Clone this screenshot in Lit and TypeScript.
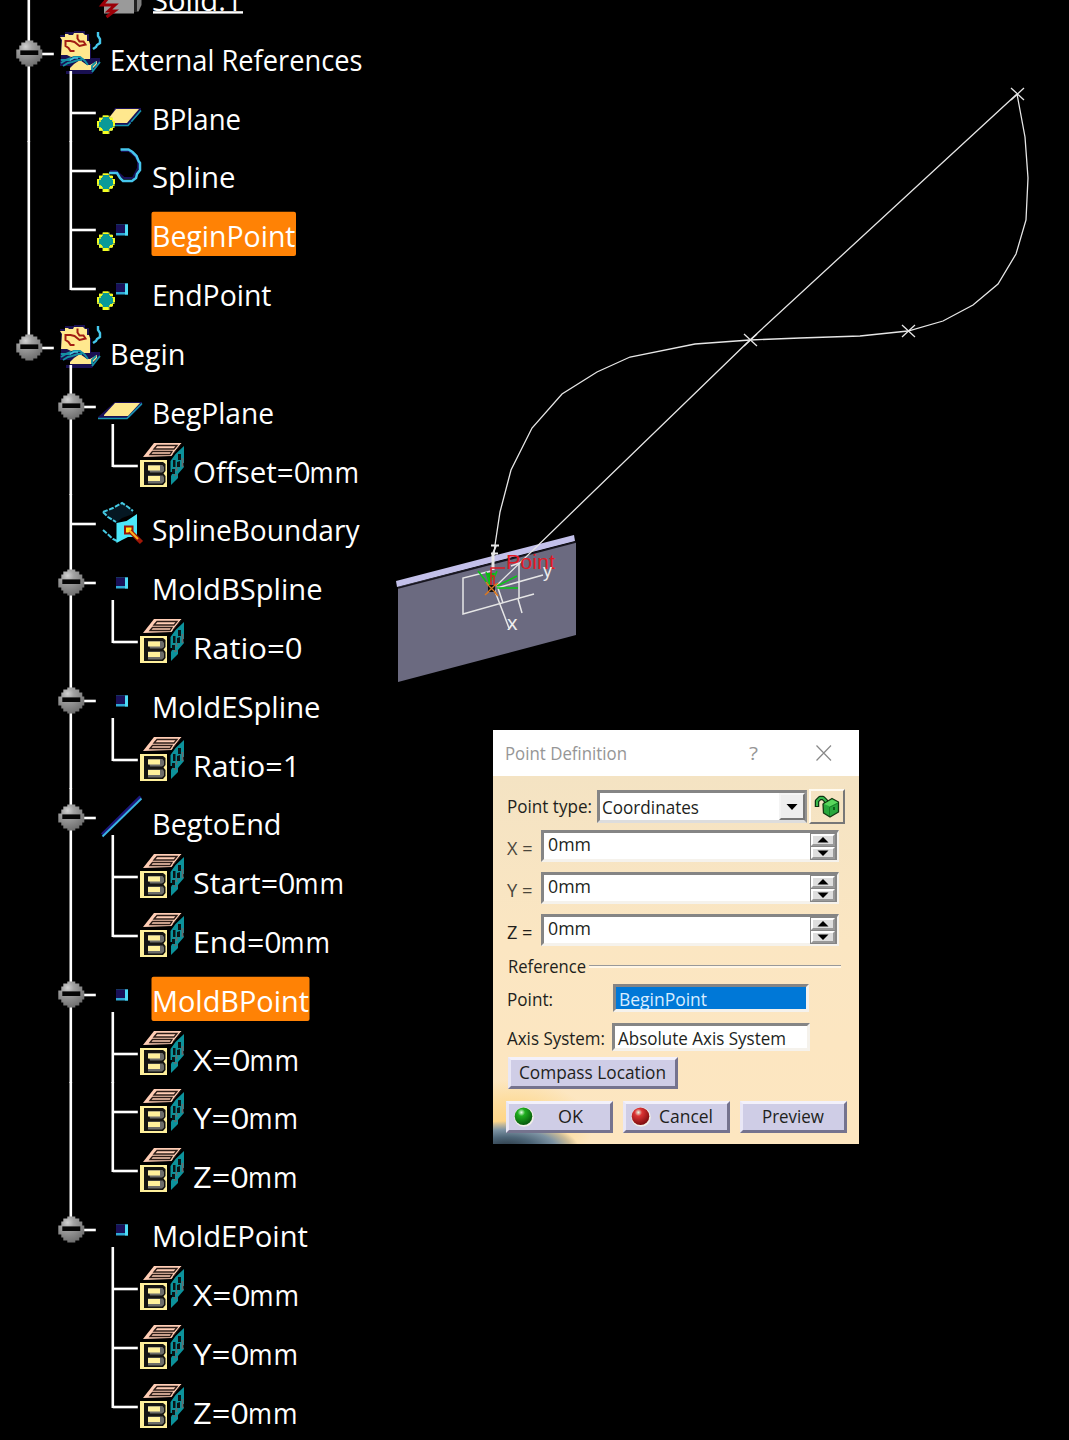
import { LitElement, html, svg, css, nothing } from "lit";
import { customElement, property } from "lit/decorators.js";

type Kind = "solid" | "set" | "refplane" | "refspline" | "refpoint" | "plane" | "param" | "boundary" | "point" | "line";

interface Item {
  label: string;
  kind: Kind;
  level: number;
  end: number;
  selected?: boolean;
  toggle?: boolean;
  last?: boolean;
}

const ITEMS: Item[] = [
  { label: "Solid.1", kind: "solid", level: 1, end: 242 },
  { label: "External References", kind: "set", level: 0, end: 362, toggle: true },
  { label: "BPlane", kind: "refplane", level: 1, end: 240.5 },
  { label: "Spline", kind: "refspline", level: 1, end: 235 },
  { label: "BeginPoint", kind: "refpoint", level: 1, end: 295, selected: true },
  { label: "EndPoint", kind: "refpoint", level: 1, end: 271, last: true },
  { label: "Begin", kind: "set", level: 0, end: 185, toggle: true, last: true },
  { label: "BegPlane", kind: "plane", level: 1, end: 273.5, toggle: true },
  { label: "Offset=0mm", kind: "param", level: 2, end: 359, last: true },
  { label: "SplineBoundary", kind: "boundary", level: 1, end: 359 },
  { label: "MoldBSpline", kind: "point", level: 1, end: 322, toggle: true },
  { label: "Ratio=0", kind: "param", level: 2, end: 302.5, last: true },
  { label: "MoldESpline", kind: "point", level: 1, end: 320, toggle: true },
  { label: "Ratio=1", kind: "param", level: 2, end: 300, last: true },
  { label: "BegtoEnd", kind: "line", level: 1, end: 281, toggle: true },
  { label: "Start=0mm", kind: "param", level: 2, end: 344 },
  { label: "End=0mm", kind: "param", level: 2, end: 330, last: true },
  { label: "MoldBPoint", kind: "point", level: 1, end: 308.5, toggle: true, selected: true },
  { label: "X=0mm", kind: "param", level: 2, end: 299 },
  { label: "Y=0mm", kind: "param", level: 2, end: 298 },
  { label: "Z=0mm", kind: "param", level: 2, end: 297.5, last: true },
  { label: "MoldEPoint", kind: "point", level: 1, end: 307.5, toggle: true, last: true },
  { label: "X=0mm", kind: "param", level: 2, end: 299 },
  { label: "Y=0mm", kind: "param", level: 2, end: 298 },
  { label: "Z=0mm", kind: "param", level: 2, end: 297.5, last: true },
];

/* Icon origin: left edge of the icon cell, top edge of the row. */
const cyanDot = svg`
  <rect x="14" y="24.5" width="12" height="11" fill="#2fa9d6"/>
  <rect x="14" y="24.5" width="9" height="8.5" fill="#191058"/>
  <rect x="23" y="24.5" width="3" height="11" fill="#4fdcf6"/>`;
const refMark = svg`
  <path d="M3 34.5h3.5v-2h7v2h3v3.5h2v7h-2v3h-3v3h-7v-3h-3.5v-3h-2v-7h2z" fill="#c6d93a"/>
  <path d="M5 36h2v-2h6v2h3v3h1.5v5h-1.500v2h-3v2h-6v-2h-2v-2h-2v-5h2z" fill="#0a9a98"/>
  <path d="M1 38h2v5h-2zM17 38h2v5h-2zM7 48h5v3h-5zM3 35h3v2h-3zM14 35h3v2h-3zM3 45h3v2h-3zM14 45h3v2h-3zM7 32.500h5v1.500h-5z" fill="#f4ff20"/>`;

const ICONS: Record<Kind, unknown> = {
  solid: svg`
    <path d="M6 28h30v20.500h-30z" fill="#9a9a9a"/><path d="M36 28h3v19h-3z" fill="#222"/>
    <path d="M39 28h4.500v12l-3 6.500h-1.500z" fill="#808080"/>
    <path d="M10 33l-6 7h13l-6.500 6h6l-8 6" fill="none" stroke="#9b0008" stroke-width="3"/>`,
  set: svg`
    <path d="M0 11h5v-3h9v-1h11v3h4v10h2v14h9v5l-8 11h-26v-3h4v-5h-10v-7h1v-19z" fill="#191052"/>
    <path d="M0 13h5v-3h3l1 1h4l1-2h9l2 2h2v6h2l1 3v15h-6l-8-3-5 1-4-2h-6l1-15z" fill="#ffe88e"/>
    <path d="M10 44l4-4 6-4 7 5h3l7-4v3l-6 6h-21z" fill="#ffe88e"/>
    <path d="M17.500 10.500v4l2 3h4l2 3-6 1.500-5-4-4-1h-5v5l3 2 2 3h4" fill="none" stroke="#a21c13" stroke-width="2"/>
    <path d="M1 39l5-3h4l4-3h6l5 4 3 4M3 42l5-3 4-1 6-2h4M1 36h5l5-2" fill="none" stroke="#1590a4" stroke-width="1.900"/>
    <path d="M10 36l4-2h4" fill="none" stroke="#45c4e0" stroke-width="1.500"/>
    <path d="M38 8v4l2 3v4l-3 2-1 2-3 2" fill="none" stroke="#45c8ec" stroke-width="2.400"/>
    <path d="M40 38l-8 10M36 38l-4 4v4" fill="none" stroke="#1594a4" stroke-width="1.900"/>`,
  refplane: svg`
    <path d="M12 38l7-13h26v3l-13 15h-17z" fill="#191058"/>
    <path d="M12 36l8-10h23l-12 14h-16z" fill="#ffe88e"/>
    <path d="M17 42.500h15l13-15" fill="none" stroke="#1695ae" stroke-width="1.600" stroke-dasharray="16 0 3 1"/>${refMark}`,
  refspline: svg`
    <path d="M25 10h8l6 5 3 5v7l-5 10h-9l-8-7h-6" fill="none" stroke="#191058" stroke-width="2"/>
    <path d="M24.500 8.500h8l4 2.500 4 4 2 5 1.500 2v7l-3 4-1 4-4 3h-9l-3-3-3-5h-8" fill="none" stroke="#46c6ed" stroke-width="2.500"/>${refMark}`,
  refpoint: svg`<g transform="translate(6 0)">${cyanDot}</g>${refMark}`,
  plane: svg`
    <path d="M-4 40l17-15h27v3l-13 13h-31z" fill="#191058"/>
    <path d="M2 38l11-12h25l-12 13h-24z" fill="#ffe88e"/>
    <path d="M-4 41.500h29l15-15" fill="none" stroke="#1695ae" stroke-width="1.700"/>`,
  param: svg`
    <path d="M3 21l11-14h27.500l-10 13z" fill="#ffcdb5"/>
    <path d="M14 13l3-3.500h20l-3 3.500zM10 18.500l2.500-3h19.500l-2 3z" fill="none" stroke="#2b1c17" stroke-width="1.300"/>
    <path d="M33 18l8-10" stroke="#2b1c17" stroke-width="1"/>
    <path d="M30.500 25l5-7 8.500-8v17h-2l2 4-6 7v4l-3 3-4 4v-9l2-4h-2.500z" fill="#0c929b"/>
    <path d="M33 24h2.500v7h-2.500zM38 18h3v6h-3zM37 26l3-1v6h-3zM32 33h3v5h-3z" fill="#0a1416"/>
    <path d="M42.500 22v9M36.500 31v4M34 39h3" fill="none" stroke="#646e70" stroke-width="1.700"/>
    <path d="M0 24h27v27h-27z" fill="#fff09b"/>
    <path d="M4 26h19l2.500 2v7l-2 2.500 2 2.500v6l-2.500 3h-19z" fill="#151412"/>
    <path d="M8 29h14.500l1.500 2v4l-2 1.500h-12zM8 39.500h15l1 2v4l-2 2h-14z" fill="#6d6d69"/>
    <path d="M8 29.500h12v5h-12zM8 40h12v5h-12z" fill="#fff09b"/>`,
  boundary: svg`
    <path d="M14 29l-7-4-6-7 10-3 9-7 11 8v4l-11 4z" fill="#051722"/>
    <path d="M1 18l10-4 9-5 6 4 5 4M1 18l5 5 8 5M1 36l10 9 4 2" fill="none" stroke="#45c9e2" stroke-width="2" stroke-dasharray="5 1.500"/>
    <path d="M14.500 29l10-2 10.500-7v23h-9l-6 3-5.500 3z" fill="#4ce9fb"/>
    <path d="M23 32.500h7.500v7h-7.500z" fill="#ffe91c" stroke="#9a1608" stroke-width="2"/>
    <path d="M28 37l11.500 11.500" stroke="#a01808" stroke-width="4.500"/><path d="M27 36l9 9" stroke="#ffb21c" stroke-width="2"/>`,
  point: cyanDot,
  line: svg`<path d="M0 46.500L38.500 8.500" stroke="#1c177d" stroke-width="3"/><path d="M0.500 48.500L39.500 10.500" stroke="#3ab5e4" stroke-width="1.900"/>`,
};

const sized = (s: string, w: number, size: number, cls = "", h = 22, base = 17) => html`
  <svg class="t ${cls}" width=${w} height=${h}><text x="0" y=${base} font-size=${size} textLength=${w} lengthAdjust="spacingAndGlyphs">${s}</text></svg>`;

@customElement("tree-row")
class TreeRow extends LitElement {
  @property({ attribute: false }) item!: Item;
  @property({ attribute: false }) lines: boolean[] = [];
  @property({ attribute: false }) parentOf = false;

  static styles = css`
    :host { display: flex; height: 58.82px; flex: none; }
    svg { display: block; overflow: visible; flex: none; }
    text { font-family: "Open Sans", "Noto Sans", sans-serif; fill: #fff; }
    .guides { z-index: 1; position: relative; }
  `;

  render() {
    const it = this.item;
    const x = 28.8 + it.level * 42;
    const iconX = [60, 102, 140][it.level] - (it.kind.startsWith("ref") ? 6 : 0) + (it.kind === "solid" ? -4 : 0);
    const cell = [109.5, 151.5, 193][it.level];
    const unit = it.label.endsWith("mm");
    const len = it.end - cell;
    const base = it.kind === "solid" ? 46 : 47.3;
    return html`
      <svg class="guides" width=${cell} height="58">
        <g transform="translate(${iconX} 0)">${ICONS[it.kind]}</g>
        ${this.lines.map((on, i) => (on ? svg`<path d="M${28.8 + i * 42} 0V59" stroke="#fff" stroke-width="2.6"/>` : nothing))}
        ${it.kind !== "solid" ? svg`<path d="M${x} 0V${it.last ? 31 : 59}" stroke="#fff" stroke-width="2.6"/>
          <path d="M${x} 30H${x + 25}" stroke="#fff" stroke-width="2.6"/>` : nothing}
        ${this.parentOf ? svg`<path d="M${x + 42} 47V59" stroke="#fff" stroke-width="2.6"/>` : nothing}
        ${it.toggle ? svg`
          <defs><radialGradient id="ball" cx="0.36" cy="0.24" r="0.8">
            <stop offset="0" stop-color="#d2d2d2"/><stop offset="0.3" stop-color="#a2a2a2"/><stop offset="1" stop-color="#6c6c6c"/>
          </radialGradient></defs>
          <g transform="translate(${x + 0.5} 29.4)">
            <path d="M-4-13H4V-11H8V-8H11V-4H13V5H11V8H8V11H4V13H-4V11H-8V8H-10V5H-13V-4H-10V-8H-8V-11H-4z" fill="url(#ball)"/>
            <rect x="-9" y="-3" width="18" height="4.6" fill="#050505"/>
          </g>` : nothing}
      </svg>
      <svg width=${len} height="58">
        ${it.selected ? svg`<rect x="-0.5" y="11.700" width=${len + 1} height="44.3" rx="2" fill="#ff8205"/>` : nothing}
        ${unit
          ? svg`<text y=${base} font-size="28.5"><tspan x="0" textLength=${len - 48.5} lengthAdjust="spacingAndGlyphs">${it.label.slice(0, -2)}</tspan><tspan x=${len - 49.5} textLength="24" lengthAdjust="spacingAndGlyphs">m</tspan><tspan x=${len - 24.5} textLength="24.5" lengthAdjust="spacingAndGlyphs">m</tspan></text>`
          : svg`<text x="0" y=${base} font-size="28.5" textLength=${len} lengthAdjust="spacingAndGlyphs">${it.label}</text>`}
        ${it.kind === "solid" ? svg`<rect x="1" y="46.2" width="90" height="2.4" fill="#fff"/>` : nothing}
      </svg>`;
  }
}

@customElement("feature-tree")
class FeatureTree extends LitElement {
  static styles = css`
    :host { display: flex; flex-direction: column; margin-top: -35px; width: 380px; }
  `;
  render() {
    return ITEMS.map((it, i) => {
      const lines: boolean[] = [];
      for (let l = 0; l < it.level; l++) {
        const next = ITEMS.slice(i + 1).find((n) => n.level <= l);
        lines.push(next?.level === l);
      }
      return html`<tree-row .item=${it} .lines=${lines} .parentOf=${(ITEMS[i + 1]?.level ?? 0) > it.level}></tree-row>`;
    });
  }
}

@customElement("model-view")
class ModelView extends LitElement {
  static styles = css`
    :host { display: block; }
    svg { display: block; }
    text { font-family: "Liberation Sans", sans-serif; }
  `;
  render() {
    const cross = (x: number, y: number) => svg`<path d="M${x - 6} ${y - 6}l13 12m0-12l-13 12"/>`;
    return html`<svg width="1069" height="1440" fill="none" stroke="#e6e6e6" stroke-width="1.3">
      <path d="M398 587L576 542V635L398 682z" fill="#6b6a80" stroke="none"/>
      <path d="M396 581L574 535L575 541L397 587z" fill="#c3c0ea" stroke="none"/>
      <path d="M398 588L576 542" stroke="#17151f" stroke-width="1.6"/>
      <path d="M1017 94L1025 137 1028 178 1026 220 1016 254 998 284 973 305 943 321 908 331 860 336 800 338 750 340 695 344 630 357 597 372 562 394 532 428 511 470 500 512 495 545 494 555"/>
      <path d="M1017 94L750 340L497 585"/>
      ${cross(1017, 94)}${cross(908, 331)}${cross(750, 340)}
      <g stroke-width="1.5">
        <path d="M491 571L463 578V614L534 594M519 599V563L511 566M497 588L543 575"/>
        <path d="M493 586L509 628M497 585L503 603M518 599L522 613"/>
        <path d="M491 545.500h8M496 546l-3 7M491 553.500h7" stroke-width="1.8"/>
        <path d="M493 553V570" stroke-width="3"/>
      </g>
      <path d="M491 588L478 571M490 585L486 572M489 584L491 573M493 580L497 571M497 586L517 576M497 588H518" stroke="#08c914" stroke-width="1.5"/>
      <path d="M486 573L491 582L495 573z" fill="#08b914" stroke="none"/>
      <path d="M491 586V568H505M491 576h3v10h-3z" stroke="#e11925" stroke-width="1.5"/>
      <path d="M485 595L498 583M486 582L498 596" stroke="#d97822" stroke-width="1.5"/>
      <rect x="488" y="585" width="7" height="7" fill="#111" stroke="none"/>
      <path d="M487 584l9 9m0-9l-9 9" stroke="#d97822"/>
      <text x="506" y="569" font-size="20" textLength="49" lengthAdjust="spacingAndGlyphs" fill="#e11925" stroke="none">Point</text>
      <text x="543" y="577" font-size="18" fill="#eee" stroke="none">y</text>
      <text x="507" y="630" font-size="21" fill="#eee" stroke="none">x</text>
    </svg>`;
  }
}

@customElement("point-dialog")
class PointDialog extends LitElement {
  static styles = css`
    :host { display: flex; flex-direction: column; width: 366px; height: 414px; overflow: hidden; background: #fde6c0; }
    svg { display: block; flex: none; overflow: visible; }
    text { font-family: "Open Sans", "Noto Sans", sans-serif; fill: #221f1c; }
    .muted text { fill: #969696; }
    .light text { fill: #d9edff; }
    .dim text { fill: #4a463c; }
    .title { display: flex; height: 46px; background: #fff; padding: 12px 26px 0 12px; box-sizing: border-box; flex: none; }
    .help { margin-left: 122px; }
    .close { margin: 3px 0 0 58px; }
    .body { flex: 1; display: flex; flex-direction: column; padding: 13px 12px 0 14px;
      background:
        radial-gradient(ellipse 72px 27px at 14px 372px, #27343f 0, #4d6577 40%, #7d93a3 68%, #c9bb98 88%, transparent 100%),
        radial-gradient(ellipse 80px 48px at 20px 352px, #ffd27c 0, #fddc9c 55%, transparent 100%),
        linear-gradient(#f4e3c3, #fbe6c2 45%, #fde6c0); }
    .row { display: flex; flex: none; box-sizing: border-box; }
    .sunk { box-sizing: border-box; background: #fff; border: 3px solid; border-color: #858585 #f5f2ec #f5f2ec #858585; display: flex; }
    .combo { width: 210px; height: 33px; margin: 1px 0 0 5px; padding-left: 2px; justify-content: space-between; border-right-color: #909090; border-bottom-color: #ddd; }
    .arrow { width: 26px; margin-right: -1px; background: #eee; box-sizing: border-box; border: 2px solid; border-color: #f4f4f4 #777 #777 #f4f4f4; display: grid; place-items: center; }
    .lock { width: 36px; height: 35px; margin-left: 2px; box-sizing: border-box; border: 2px solid; border-color: #fffaf0 #777 #777 #fffaf0; display: grid; place-items: center; }
    .coord { height: 42px; }
    .coord .sunk { width: 298px; height: 32px; justify-content: space-between; padding-left: 4px; border-right-width: 2px; }
    .lbl { padding-top: 6px; width: 34px; }
    .spin { display: flex; flex-direction: column; width: 27px; height: 27px; background: #858585; padding: 1px 2px 1px 1px; box-sizing: border-box; gap: 1px; }
    .spin span { flex: 1; display: grid; place-items: center; background: #dedede; border: 2px solid; border-color: #fff #999 #999 #fff; box-sizing: border-box; min-height: 0; }
    .ref { height: 29px; gap: 3px; margin-left: 1px; }
    .rule { width: 252px; height: 1px; margin-top: 9px; background: #999; border-bottom: 2px solid #fff6e6; }
    .point { height: 39px; }
    .point .sunk { width: 196px; height: 28px; background: #0078d7; margin-left: 60px; padding-left: 3px; margin-top: -1px; }
    .axis { height: 33px; }
    .axis .sunk { width: 198px; height: 28px; margin-left: 7px; padding-left: 3px; margin-top: -1px; }
    .btn { display: flex; align-items: center; box-sizing: border-box; background: #cfcde6; border: 3px solid; border-color: #f3f1fb #75738e #75738e #e9e7f6; height: 32px; }
    .compass { width: 170px; padding-left: 8px; margin-left: 1px; }
    .actions { margin: 12px 0 0 -1px; gap: 10px; }
    .actions .btn { width: 107px; padding-left: 5px; }
    .actions .plain { padding-left: 19px; }
    .ok { margin-left: 24px; }
    .cancel { margin-left: 8px; }
  `;

  render() {
    const ball = (c: string, d: string, id: string) => html`<svg width="20" height="20">
      <defs><radialGradient id=${id} cx="0.38" cy="0.28" r="0.7"><stop offset="0" stop-color="#e8ffe8"/><stop offset="0.3" stop-color=${c}/><stop offset="1" stop-color=${d}/></radialGradient></defs>
      <circle cx="10" cy="10" r="9.8" fill="#f1efe9"/><circle cx="9.500" cy="9.300" r="8.800" fill="url(#${id})"/></svg>`;
    return html`
      <div class="title">
        ${sized("Point Definition", 122, 18, "muted", 24, 18)}
        <span class="help">${sized("?", 9, 19, "muted", 24, 18)}</span>
        <svg class="close" width="16" height="16"><path d="M0.5 0.5L15 15.5M15 0.5L0.5 15.5" stroke="#888" stroke-width="1.2"/></svg>
      </div>
      <div class="body">
        <div class="row" style="height:41px">
          ${sized("Point type:", 85, 17.5, "", 30, 24)}
          <div class="sunk combo">${sized("Coordinates", 97, 17.5, "", 26, 20.5)}
            <span class="arrow"><svg width="12" height="6"><path d="M0.500 0H11.500L6 6z"/></svg></span></div>
          <span class="lock"><svg width="26" height="24" stroke-linejoin="round">
            <path d="M3 12V6L6 3H9L12 6V16" fill="none" stroke="#0b3510" stroke-width="4.500"/>
            <path d="M3 11V6L6 3H9L12 6V16" fill="none" stroke="#39b84c" stroke-width="2"/>
            <path d="M9 9L18 3.500L24.500 7V17L16 22L9.500 18z" fill="#28a83c" stroke="#123a12" stroke-width="1.300"/>
            <path d="M10 9L18 4.500L24 7.500L16 11.500z" fill="#58d65c"/>
            <path d="M15.500 12V21M16 12L24 8" fill="none" stroke="#168026"/><path d="M20 12v3" stroke="#0b5717" stroke-width="1.800"/></svg></span>
        </div>
        ${["X", "Y", "Z"].map((a) => html`<div class="row coord">
          <span class="lbl">${sized(a + " =", 25.5, 17.5, a === "Z" ? "" : "dim", 22, 18.5)}</span>
          <div class="sunk">${sized("0mm", 43, 17.5, "", 24, 18)}
            <span class="spin"><span><svg width="12" height="6"><path d="M6 0L11.500 5.500H0.500z"/></svg></span><span><svg width="12" height="6"><path d="M0.500 0.500H11.500L6 6z"/></svg></span></span>
          </div></div>`)}
        <div class="row ref">${sized("Reference", 78, 17.5, "", 22, 16.5)}<div class="rule"></div></div>
        <div class="row point">${sized("Point:", 46, 17.5, "", 24, 20.5)}
          <div class="sunk">${sized("BeginPoint", 88, 17.5, "light", 22, 18.5)}</div></div>
        <div class="row axis">${sized("Axis System:", 98, 17.5, "", 24, 20.5)}
          <div class="sunk">${sized("Absolute Axis System", 168, 17.5, "", 22, 18.5)}</div></div>
        <div class="btn compass">${sized("Compass Location", 147, 17.5)}</div>
        <div class="row actions">
          <div class="btn">${ball("#1fae1f", "#075c0c", "g")}<span class="ok">${sized("OK", 25, 17.5)}</span></div>
          <div class="btn">${ball("#dc3434", "#820d10", "r")}<span class="cancel">${sized("Cancel", 54, 17.5)}</span></div>
          <div class="btn plain">${sized("Preview", 62, 17.5)}</div>
        </div>
      </div>`;
  }
}

@customElement("app-root")
class AppRoot extends LitElement {
  static styles = css`
    :host { display: block; position: relative; width: 1069px; height: 1440px; overflow: hidden; background: #000; }
    model-view { position: absolute; left: 0; top: 0; }
    point-dialog { position: absolute; left: 493px; top: 730px; }
  `;
  render() {
    return html`<feature-tree></feature-tree><model-view></model-view><point-dialog></point-dialog>`;
  }
}
